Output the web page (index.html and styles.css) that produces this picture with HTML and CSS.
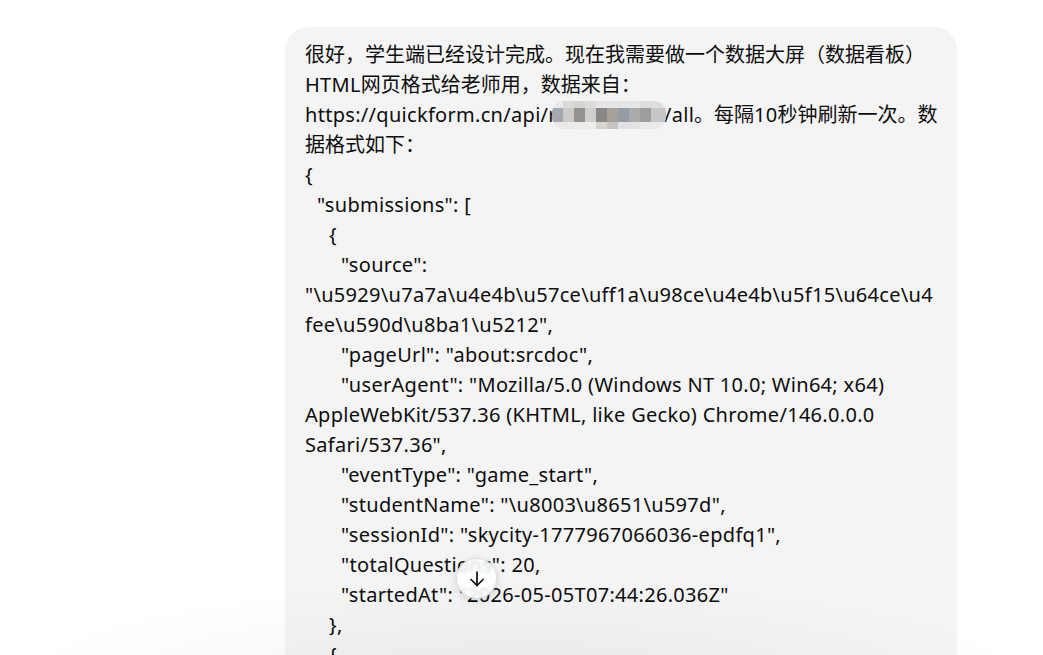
FILE: index.html
```html
<!DOCTYPE html>
<html lang="zh-CN">
<head>
    <meta charset="UTF-8">
    <meta name="viewport" content="width=device-width, initial-scale=1.0">
    <title>Chat</title>
    <link rel="stylesheet" href="styles.css">
</head>
<body>
    <main class="thread">
        <div class="user-row">
            <div class="bubble">
                <div class="ln"><span class="zh">很好，学生端已经设计完成。现在我需要做一个数据大屏（数据看板）</span></div>
                <div class="ln">HTML<span class="zh">网页格式给老师用，数据来自：</span></div>
                <div class="ln">https://quickform.cn/api/r<span class="redacted"></span>/all<span class="zh">。每隔</span>10<span class="zh">秒钟刷新一次。数</span></div>
                <div class="ln"><span class="zh">据格式如下：</span></div>
                <div class="ln">{</div>
                <div class="ln i1">"submissions": [</div>
                <div class="ln i2">{</div>
                <div class="ln i3">"source":</div>
                <div class="ln">"\u5929\u7a7a\u4e4b\u57ce\uff1a\u98ce\u4e4b\u5f15\u64ce\u4</div>
                <div class="ln">fee\u590d\u8ba1\u5212",</div>
                <div class="ln i3">"pageUrl": "about:srcdoc",</div>
                <div class="ln i3">"userAgent": "Mozilla/5.0 (Windows NT 10.0; Win64; x64)</div>
                <div class="ln">AppleWebKit/537.36 (KHTML, like Gecko) Chrome/146.0.0.0</div>
                <div class="ln">Safari/537.36",</div>
                <div class="ln i3">"eventType": "game_start",</div>
                <div class="ln i3">"studentName": "\u8003\u8651\u597d",</div>
                <div class="ln i3">"sessionId": "skycity-1777967066036-epdfq1",</div>
                <div class="ln i3">"totalQuestions": 20,</div>
                <div class="ln i3">"startedAt": "2026-05-05T07:44:26.036Z"</div>
                <div class="ln i2">},</div>
                <div class="ln i2">{</div>
                <div class="ln i3">"source":</div>
            </div>
        </div>
    </main>

    <div class="bottom-fade"></div>

    <button class="scroll-down" aria-label="Scroll to bottom">
        <svg width="20" height="20" viewBox="0 0 20 20" fill="none" stroke="#0d0d0d" stroke-width="1.7" stroke-linecap="round" stroke-linejoin="round">
            <path d="M10 3v13.5"/>
            <path d="M4 10.5l6 6 6-6"/>
        </svg>
    </button>
</body>
</html>
```

FILE: styles.css
```css
* {
    margin: 0;
    padding: 0;
    box-sizing: border-box;
}

body {
    background: #ffffff;
    color: #0d0d0d;
    font-family: "Noto Sans", "Noto Sans CJK SC", sans-serif;
    font-size: 20px;
    line-height: 30px;
    overflow: hidden;
    height: 100vh;
}

.thread {
    padding: 27px 86px 0 0;
}

.user-row {
    display: flex;
    justify-content: flex-end;
}

.bubble {
    width: 672px;
    background-color: #f4f4f4;
    border-radius: 24px;
    padding: 13px 20px 20px;
}

.ln {
    white-space: pre;
    letter-spacing: 0.3px;
}

.zh {
    letter-spacing: 0;
}

.i1 { padding-left: 12px; }
.i2 { padding-left: 24px; }
.i3 { padding-left: 36px; }

.redacted {
    display: inline-block;
    width: 114px;
    height: 28px;
    margin-left: -5px;
    margin-right: -2px;
    vertical-align: -7px;
    border-radius: 12px;
    filter: blur(0.6px);
    background-image:
        linear-gradient(90deg, #e9e9ea 0 11px, #dadada 11px 22px, #d4d4d2 22px 33px, #dcdcdc 33px 44px, #e6e6e6 44px 66px, #e6e6e6 66px 88px, #dedede 88px 114px),
        linear-gradient(90deg, #a4a9b0 0 11px, #cdcbc8 11px 22px, #959290 22px 33px, #cfcfd1 33px 44px, #8a8786 44px 55px, #a89f99 55px 66px, #949ca6 66px 77px, #a9aba8 77px 88px, #9e9e9e 88px 99px, #c6c6c6 99px 114px),
        linear-gradient(90deg, #e9e9ea 0 22px, #ececec 22px 44px, #d7d5d0 44px 55px, #c4c4c4 55px 66px, #e2e2e4 66px 88px, #eaeaea 88px 114px);
    background-size: 114px 7px, 114px 14px, 114px 7px;
    background-position: 0 0, 0 7px, 0 21px;
    background-repeat: no-repeat;
}

.bottom-fade {
    position: fixed;
    left: 0;
    right: 0;
    bottom: 0;
    height: 120px;
    pointer-events: none;
    background: radial-gradient(ellipse 65% 100% at 50% 115%, rgba(0, 0, 0, 0.04), rgba(0, 0, 0, 0) 75%);
}

.scroll-down {
    position: fixed;
    left: 456px;
    bottom: 56px;
    width: 41px;
    height: 41px;
    border-radius: 50%;
    border: 1px solid rgba(0, 0, 0, 0.12);
    background-color: rgba(255, 255, 255, 0.86);
    backdrop-filter: blur(1.5px);
    box-shadow: 0 2px 8px rgba(0, 0, 0, 0.14);
    display: flex;
    align-items: center;
    justify-content: center;
    cursor: pointer;
}
```
